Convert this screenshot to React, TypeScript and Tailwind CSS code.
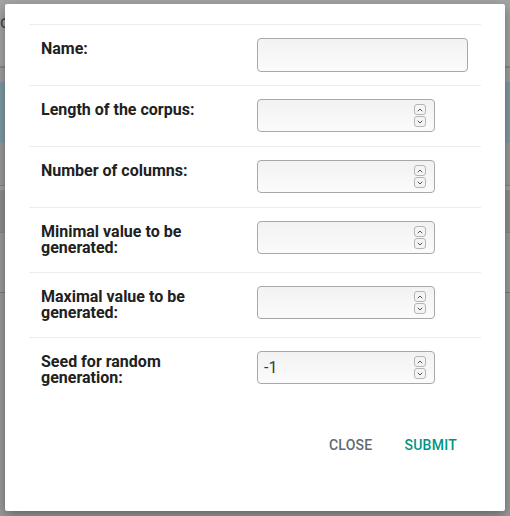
import { ChevronUp, ChevronDown } from 'lucide-react';

interface FieldRow {
  label: string;
  kind: 'text' | 'number';
  value?: string;
}

const rows: FieldRow[] = [
  { label: 'Name:', kind: 'text' },
  { label: 'Length of the corpus:', kind: 'number' },
  { label: 'Number of columns:', kind: 'number' },
  { label: 'Minimal value to be generated:', kind: 'number' },
  { label: 'Maximal value to be generated:', kind: 'number' },
  { label: 'Seed for random generation:', kind: 'number', value: '-1' },
];

function Spinner() {
  return (
    <div className="flex flex-col gap-[1px] mr-[8px]">
      <span className="flex h-[11px] w-[12px] items-center justify-center rounded-[3px] border border-[#b5b5b5] bg-[#f4f4f4] text-[#555]">
        <ChevronUp className="h-[8px] w-[8px]" strokeWidth={3} />
      </span>
      <span className="flex h-[11px] w-[12px] items-center justify-center rounded-[3px] border border-[#b5b5b5] bg-[#f4f4f4] text-[#555]">
        <ChevronDown className="h-[8px] w-[8px]" strokeWidth={3} />
      </span>
    </div>
  );
}

function Field({ row }: { row: FieldRow }) {
  const twoLine = row.label.length > 24;
  return (
    <div
      className={`grid grid-cols-[228px_1fr] items-start border-t border-[#ececec] pt-[13px] ${
        twoLine ? 'h-[65px]' : 'h-[61px]'
      }`}
    >
      <label className="pl-[12px] pr-[36px] pt-[3px] text-[16px] font-bold leading-[16px] text-[#212121]">
        {row.label}
      </label>
      {row.kind === 'text' ? (
        <div className="h-[34px] w-[211px] rounded-[4px] border border-[#a8a8a8] bg-gradient-to-b from-[#f2f2f2] to-[#fbfbfb]" />
      ) : (
        <div className="flex h-[33px] w-[178px] items-center justify-between rounded-[4px] border border-[#a8a8a8] bg-gradient-to-b from-[#f2f2f2] to-[#fbfbfb]">
          <span className="pl-[6px] text-[16px] text-[#3a3a3a]">{row.value ?? ''}</span>
          <Spinner />
        </div>
      )}
    </div>
  );
}

export default function App() {
  return (
    <div className="relative h-[516px] w-[510px] overflow-hidden bg-[#9a9a9a] font-['Roboto',sans-serif]">
      {/* dimmed page behind the dialog */}
      <div className="flex h-[66px] items-start bg-[#a4a4a4] pt-[8px] text-[18px] text-[#444]">c</div>
      <div className="h-[2px] bg-[#878787]" />
      <div className="h-[14px] bg-[#9e9e9e]" />
      <div className="h-[61px] bg-[#7f9ba3]" />
      <div className="h-[42px] bg-[#9a9a9a]" />
      <div className="h-[1px] bg-[#848484]" />
      <div className="h-[4px] bg-[#a2a2a2]" />
      <div className="h-[42px] bg-[#8f8f8f]" />
      <div className="h-[1px] bg-[#888]" />
      <div className="h-[59px] bg-[#9a9a9a]" />
      <div className="h-[1px] bg-[#7c7c7c]" />

      <div className="absolute left-[5px] top-[4px] flex h-[507px] w-[500px] flex-col rounded-[2px] bg-white px-[24px] pt-[20px] shadow-[0_4px_12px_rgba(0,0,0,0.35)]">
        <div className="flex flex-col">
          {rows.map((r) => (
            <Field key={r.label} row={r} />
          ))}
        </div>
        <div className="mt-[33px] flex justify-end gap-[32px] pr-[24px] text-[14px] font-medium tracking-[0.25px]">
          <button className="text-[#626973]">CLOSE</button>
          <button className="text-[#009485]">SUBMIT</button>
        </div>
      </div>
    </div>
  );
}
